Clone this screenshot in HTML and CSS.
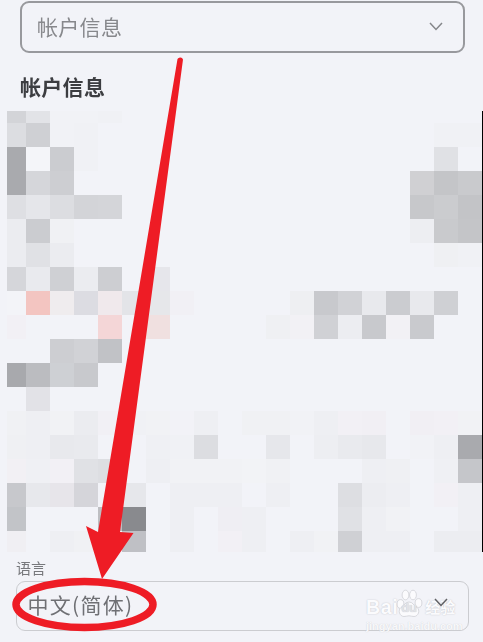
FILE: index.html
```html
<!DOCTYPE html>
<html lang="zh-CN">
<head>
<meta charset="utf-8">
<title>帐户信息</title>
<link rel="stylesheet" href="styles.css">
</head>
<body>
<main class="page">
  <div class="select select-top">
    <span class="select-value">帐户信息</span>
    <svg class="chevron" viewBox="0 0 14 9"><path d="M1 1l6 6.5L13 1"/></svg>
  </div>
  <h2 class="heading">帐户信息</h2>
  <svg class="mosaic" width="483" height="441" viewBox="0 111 483 441" shape-rendering="crispEdges">
    <g id="r0">
      <rect x="7" y="111" width="19" height="12" fill="#d3d4d8"/><rect x="26" y="111" width="24" height="12" fill="#e2e3e7"/><rect x="50" y="111" width="48" height="12" fill="#f1f2f6"/><rect x="98" y="111" width="24" height="12" fill="#f0f1f5"/>
    </g>
    <g id="r1">
      <rect x="7" y="123" width="19" height="24" fill="#dcdde1"/><rect x="26" y="123" width="24" height="24" fill="#cfd0d4"/><rect x="50" y="123" width="24" height="24" fill="#f1f2f6"/><rect x="74" y="123" width="24" height="24" fill="#f0f1f5"/><rect x="434" y="123" width="48" height="24" fill="#f0f1f5"/>
    </g>
    <g id="r2">
      <rect x="7" y="147" width="19" height="24" fill="#a9aaae"/><rect x="26" y="147" width="24" height="24" fill="#f4f5f9"/><rect x="50" y="147" width="24" height="24" fill="#cbccd0"/><rect x="74" y="147" width="24" height="24" fill="#f0f1f5"/><rect x="434" y="147" width="24" height="24" fill="#e0e1e5"/>
    </g>
    <g id="r3">
      <rect x="7" y="171" width="19" height="24" fill="#a9aaae"/><rect x="26" y="171" width="24" height="24" fill="#d5d6da"/><rect x="50" y="171" width="24" height="24" fill="#cdced2"/><rect x="410" y="171" width="24" height="24" fill="#d0d0d3"/><rect x="434" y="171" width="24" height="24" fill="#c4c5c8"/><rect x="458" y="171" width="24" height="24" fill="#c9cacd"/>
    </g>
    <g id="r4">
      <rect x="7" y="195" width="19" height="24" fill="#dedfe3"/><rect x="26" y="195" width="24" height="24" fill="#e5e6ea"/><rect x="50" y="195" width="24" height="24" fill="#dcdde1"/><rect x="74" y="195" width="24" height="24" fill="#d3d4d8"/><rect x="98" y="195" width="24" height="24" fill="#d4d5d9"/><rect x="410" y="195" width="24" height="24" fill="#c7c8cb"/><rect x="434" y="195" width="24" height="24" fill="#cbcccf"/><rect x="458" y="195" width="24" height="24" fill="#c3c4c7"/>
    </g>
    <g id="r5">
      <rect x="7" y="219" width="19" height="24" fill="#ebecf0"/><rect x="26" y="219" width="24" height="24" fill="#cbccd0"/><rect x="50" y="219" width="24" height="24" fill="#f0f1f4"/><rect x="410" y="219" width="24" height="24" fill="#edeef2"/><rect x="434" y="219" width="24" height="24" fill="#c9cacd"/><rect x="458" y="219" width="24" height="24" fill="#c4c5c8"/>
    </g>
    <g id="r6">
      <rect x="7" y="243" width="19" height="24" fill="#ebecf0"/><rect x="26" y="243" width="24" height="24" fill="#e0e1e5"/><rect x="50" y="243" width="24" height="24" fill="#ebecf0"/><rect x="434" y="243" width="24" height="24" fill="#eff0f3"/><rect x="458" y="243" width="24" height="24" fill="#f0f1f5"/>
    </g>
    <g id="r7">
      <rect x="7" y="267" width="19" height="24" fill="#d5d6da"/><rect x="26" y="267" width="24" height="24" fill="#e9eaee"/><rect x="50" y="267" width="24" height="24" fill="#cfd0d4"/><rect x="74" y="267" width="24" height="24" fill="#ebecf0"/><rect x="98" y="267" width="24" height="24" fill="#cdced2"/><rect x="146" y="267" width="24" height="24" fill="#e6e6eb"/>
    </g>
    <g id="r8">
      <rect x="7" y="291" width="19" height="24" fill="#f3f4f8"/><rect x="26" y="291" width="24" height="24" fill="#f3c5c1"/><rect x="50" y="291" width="24" height="24" fill="#efecee"/><rect x="74" y="291" width="24" height="24" fill="#dcdce2"/><rect x="98" y="291" width="24" height="24" fill="#f0e9ec"/><rect x="122" y="291" width="24" height="24" fill="#e3e4e8"/><rect x="146" y="291" width="24" height="24" fill="#e6e7ea"/><rect x="170" y="291" width="24" height="24" fill="#f1f0f5"/><rect x="290" y="291" width="24" height="24" fill="#eeeff2"/><rect x="314" y="291" width="24" height="24" fill="#c8c9cd"/><rect x="338" y="291" width="24" height="24" fill="#d1d2d6"/><rect x="362" y="291" width="24" height="24" fill="#e8e9ed"/><rect x="386" y="291" width="24" height="24" fill="#cbccd0"/><rect x="410" y="291" width="24" height="24" fill="#e8e9ed"/><rect x="434" y="291" width="24" height="24" fill="#cfd0d4"/>
    </g>
    <g id="r9">
      <rect x="7" y="315" width="19" height="24" fill="#f2f0f5"/><rect x="98" y="315" width="24" height="24" fill="#f4d6d7"/><rect x="146" y="315" width="24" height="24" fill="#f0e0e0"/><rect x="266" y="315" width="24" height="24" fill="#eff0f3"/><rect x="290" y="315" width="24" height="24" fill="#f2f1f5"/><rect x="314" y="315" width="24" height="24" fill="#d0d1d5"/><rect x="338" y="315" width="24" height="24" fill="#ecedf1"/><rect x="362" y="315" width="24" height="24" fill="#c8c9cd"/><rect x="386" y="315" width="24" height="24" fill="#f2f1f5"/><rect x="410" y="315" width="24" height="24" fill="#c9cace"/>
    </g>
    <g id="r10">
      <rect x="50" y="339" width="24" height="24" fill="#cdced2"/><rect x="74" y="339" width="24" height="24" fill="#d1d2d6"/><rect x="98" y="339" width="24" height="24" fill="#c1c2c6"/>
    </g>
    <g id="r11">
      <rect x="7" y="363" width="19" height="24" fill="#a8a9ad"/><rect x="26" y="363" width="24" height="24" fill="#bbbcc0"/><rect x="50" y="363" width="24" height="24" fill="#ced0d4"/><rect x="74" y="363" width="24" height="24" fill="#c8c9cd"/>
    </g>
    <g id="r12">
      <rect x="26" y="387" width="24" height="24" fill="#e2e2e7"/>
    </g>
    <g id="r13">
      <rect x="7" y="411" width="19" height="24" fill="#f0f1f4"/><rect x="26" y="411" width="24" height="24" fill="#eeeff3"/><rect x="50" y="411" width="24" height="24" fill="#f1f2f5"/><rect x="74" y="411" width="24" height="24" fill="#ebecf0"/><rect x="98" y="411" width="24" height="24" fill="#f1f0f5"/><rect x="122" y="411" width="24" height="24" fill="#f0f1f5"/><rect x="146" y="411" width="24" height="24" fill="#f1f2f5"/><rect x="170" y="411" width="24" height="24" fill="#f2f2f7"/><rect x="194" y="411" width="24" height="24" fill="#eeeff3"/><rect x="242" y="411" width="48" height="24" fill="#f0f1f4"/><rect x="290" y="411" width="24" height="24" fill="#f1f2f6"/><rect x="314" y="411" width="24" height="24" fill="#eeeff3"/><rect x="338" y="411" width="24" height="24" fill="#f2f0f5"/><rect x="362" y="411" width="24" height="24" fill="#f1eff4"/><rect x="410" y="411" width="24" height="24" fill="#f1eff4"/><rect x="434" y="411" width="24" height="24" fill="#f2f0f5"/><rect x="458" y="411" width="24" height="24" fill="#f1f2f5"/>
    </g>
    <g id="r14">
      <rect x="7" y="435" width="19" height="24" fill="#eff0f3"/><rect x="26" y="435" width="24" height="24" fill="#eeeff3"/><rect x="50" y="435" width="24" height="24" fill="#e8e9ed"/><rect x="74" y="435" width="24" height="24" fill="#e9eaee"/><rect x="146" y="435" width="24" height="24" fill="#eff0f4"/><rect x="170" y="435" width="24" height="24" fill="#f0f1f5"/><rect x="194" y="435" width="24" height="24" fill="#dcdde1"/><rect x="266" y="435" width="24" height="24" fill="#e6e7eb"/><rect x="314" y="435" width="24" height="24" fill="#edeef2"/><rect x="338" y="435" width="24" height="24" fill="#e9eaee"/><rect x="362" y="435" width="24" height="24" fill="#e7e8ec"/><rect x="410" y="435" width="24" height="24" fill="#f1f2f6"/><rect x="434" y="435" width="24" height="24" fill="#eeeff3"/><rect x="458" y="435" width="24" height="24" fill="#a9aaae"/>
    </g>
    <g id="r15">
      <rect x="7" y="459" width="19" height="24" fill="#f2f0f4"/><rect x="26" y="459" width="24" height="24" fill="#eff0f4"/><rect x="50" y="459" width="24" height="24" fill="#f2f0f5"/><rect x="74" y="459" width="24" height="24" fill="#e0e1e5"/><rect x="98" y="459" width="24" height="24" fill="#dddee2"/><rect x="146" y="459" width="24" height="24" fill="#eeeff3"/><rect x="170" y="459" width="72" height="24" fill="#f1f2f5"/><rect x="242" y="459" width="24" height="24" fill="#f2f3f6"/><rect x="266" y="459" width="24" height="24" fill="#f0f1f4"/><rect x="362" y="459" width="24" height="24" fill="#eeeff3"/><rect x="386" y="459" width="24" height="24" fill="#eff0f3"/><rect x="434" y="459" width="24" height="24" fill="#eff0f4"/><rect x="458" y="459" width="24" height="24" fill="#c5c6ca"/>
    </g>
    <g id="r16">
      <rect x="7" y="483" width="19" height="24" fill="#c7c8cc"/><rect x="26" y="483" width="24" height="24" fill="#e7e8ec"/><rect x="50" y="483" width="24" height="24" fill="#e7e5ea"/><rect x="74" y="483" width="24" height="24" fill="#d5d5da"/><rect x="122" y="483" width="24" height="24" fill="#e6e7eb"/><rect x="170" y="483" width="72" height="24" fill="#eeeff3"/><rect x="266" y="483" width="24" height="24" fill="#eeeff3"/><rect x="338" y="483" width="24" height="24" fill="#dddee2"/><rect x="362" y="483" width="24" height="24" fill="#ecedf1"/><rect x="386" y="483" width="24" height="24" fill="#eeeff3"/><rect x="434" y="483" width="24" height="24" fill="#f2f0f5"/><rect x="458" y="483" width="24" height="24" fill="#eeeff3"/>
    </g>
    <g id="r17">
      <rect x="7" y="507" width="19" height="24" fill="#c2c4c8"/><rect x="98" y="507" width="24" height="24" fill="#bdbec2"/><rect x="122" y="507" width="24" height="24" fill="#898a8e"/><rect x="170" y="507" width="24" height="24" fill="#eeeff3"/><rect x="218" y="507" width="24" height="24" fill="#efeef3"/><rect x="242" y="507" width="24" height="24" fill="#eeeff3"/><rect x="338" y="507" width="24" height="24" fill="#e0e1e5"/><rect x="362" y="507" width="24" height="24" fill="#eeeff3"/><rect x="386" y="507" width="24" height="24" fill="#f1f2f5"/><rect x="458" y="507" width="24" height="24" fill="#eeeff3"/>
    </g>
    <g id="r18">
      <rect x="7" y="531" width="19" height="21" fill="#f0eff3"/><rect x="50" y="531" width="24" height="21" fill="#eeeff3"/><rect x="74" y="531" width="24" height="21" fill="#f0f1f4"/><rect x="98" y="531" width="24" height="21" fill="#f0f1f4"/><rect x="122" y="531" width="24" height="21" fill="#bfc0c5"/><rect x="170" y="531" width="24" height="21" fill="#eeeff3"/><rect x="218" y="531" width="24" height="21" fill="#f2f0f5"/><rect x="242" y="531" width="24" height="21" fill="#eeeff3"/><rect x="290" y="531" width="24" height="21" fill="#eeeff3"/><rect x="314" y="531" width="24" height="21" fill="#f1f2f5"/><rect x="338" y="531" width="24" height="21" fill="#cfd0d4"/><rect x="362" y="531" width="48" height="21" fill="#eeeff3"/><rect x="434" y="531" width="48" height="21" fill="#ecedf1"/>
    </g>
    <rect x="482" y="111" width="1" height="441" fill="#000"/>
  </svg>
  <label class="field-label">语言</label>
  <div class="select select-bottom">
    <span class="select-value">中文(简体)</span>
    <svg class="chevron" viewBox="0 0 14 9"><path d="M1 1l6 6.5L13 1"/></svg>
  </div>
  <div class="watermark">
    <div class="wm-logo">
      <span class="wm-bai">Bai</span>
      <span class="wm-mark">
        <svg class="wm-paw" viewBox="0 0 28 29"><ellipse cx="5.500" cy="15" rx="3.400" ry="4.400"/><ellipse cx="10.500" cy="6" rx="3.400" ry="4.800"/><ellipse cx="18" cy="6" rx="3.400" ry="4.800"/><ellipse cx="23.500" cy="14" rx="3.400" ry="4.400"/><path d="M14 13c4 0 4.500 3.500 8 5.500 3.500 2.500 1.500 9-3 9-2 0-3.500-.7-5-.7s-3 .7-5 .7c-4.500 0-6.500-6.500-3-9 3.500-2 4-5.500 8-5.500z"/></svg>
        <span class="wm-du">du</span>
      </span>
      <span class="wm-cn">经验</span>
    </div>
    <div class="wm-url">jingyan.baidu.com</div>
  </div>
  <svg class="annotation" width="483" height="642" viewBox="0 0 483 642">
    <path class="arrow" d="M177.500 59a3 3 0 0 1 5.500 .5L120 532l13.500 1L102 579 86 526l12 6z"/>
    <ellipse class="ring" cx="84.500" cy="604.500" rx="68.500" ry="23"/>
  </svg>
</main>
</body>
</html>
```
FILE: styles.css
```css
html, body {
  margin: 0;
  padding: 0;
  background: #f2f3f8;
}
.page {
  position: relative;
  width: 483px;
  height: 642px;
  overflow: hidden;
  display: flex;
  flex-direction: column;
  font-family: "Noto Sans CJK SC", "Noto Sans", sans-serif;
}
.select {
  display: flex;
  align-items: center;
  justify-content: space-between;
  box-sizing: border-box;
  border-style: solid;
  border-radius: 9px;
}
.select-value {
  font-size: 21px;
  line-height: 1;
  filter: blur(.35px);
}
.select-top {
  width: 445px;
  height: 52px;
  margin: 1px 0 0 20px;
  padding: 0 20px 2px 15px;
  border-width: 2px;
  border-color: #98999d;
}
.select-top .select-value {
  letter-spacing: .3px;
  color: #87888c;
}
.select-bottom {
  width: 453px;
  height: 50px;
  margin: 3px 0 0 16px;
  padding: 0 20.500px 4px 10.500px;
  border-width: 1.500px;
  border-color: #cbccd0;
}
.select-bottom .select-value {
  letter-spacing: 1.300px;
  color: #6f7074;
}
.chevron {
  flex: none;
  width: 14px;
  height: 9px;
  fill: none;
  stroke: #85868a;
  stroke-width: 1.500;
}
.select-bottom .chevron {
  position: relative;
  z-index: 1;
  stroke: #606165;
  margin-bottom: 3px;
}
.heading {
  margin: 20px 0 0 20px;
  height: 38px;
  font-size: 21px;
  line-height: 26px;
  font-weight: 700;
  letter-spacing: .3px;
  color: #3c3d41;
  filter: blur(.35px);
}
.mosaic {
  display: block;
  flex: none;
}
.field-label {
  margin: 6px 0 0 16px;
  height: 20px;
  font-size: 15px;
  line-height: 20px;
  color: #77787c;
  filter: blur(.3px);
}
.watermark {
  position: absolute;
  left: 366px;
  top: 588px;
  width: 92px;
  color: #fbfbfd;
}
.wm-logo {
  display: flex;
  align-items: flex-end;
  height: 30px;
  white-space: nowrap;
  text-shadow: 0 0 1.500px #bcbdc3;
}
.wm-bai {
  flex: none;
  font-family: "Liberation Sans", sans-serif;
  font-size: 19.500px;
  font-weight: 700;
  line-height: 22px;
  letter-spacing: .6px;
}
.wm-mark {
  position: relative;
  flex: none;
  width: 28px;
  height: 29px;
  margin-left: -3px;
}
.wm-paw {
  display: block;
  width: 28px;
  height: 29px;
  fill: #fbfbfd;
  stroke: #cfd0d6;
  stroke-width: .8;
}
.wm-du {
  position: absolute;
  left: 6px;
  bottom: 3px;
  font-family: "Liberation Sans", sans-serif;
  font-size: 13px;
  font-weight: 700;
  line-height: 14px;
  color: #e2e3e8;
  text-shadow: 0 0 1px #bcbdc3;
}
.wm-cn {
  flex: none;
  margin-left: 2px;
  font-size: 15px;
  font-weight: 700;
  line-height: 22px;
}
.wm-url {
  margin-top: 2px;
  font-family: "Liberation Sans", sans-serif;
  font-size: 11px;
  font-weight: 700;
  line-height: 12px;
  white-space: nowrap;
  color: #f8f8fa;
  text-shadow: 0 0 1px #c9cad0;
}
.annotation {
  position: absolute;
  left: 0;
  top: 0;
}
.arrow {
  fill: #ee1c25;
}
.ring {
  fill: none;
  stroke: #ee1c25;
  stroke-width: 7.500;
}
```
